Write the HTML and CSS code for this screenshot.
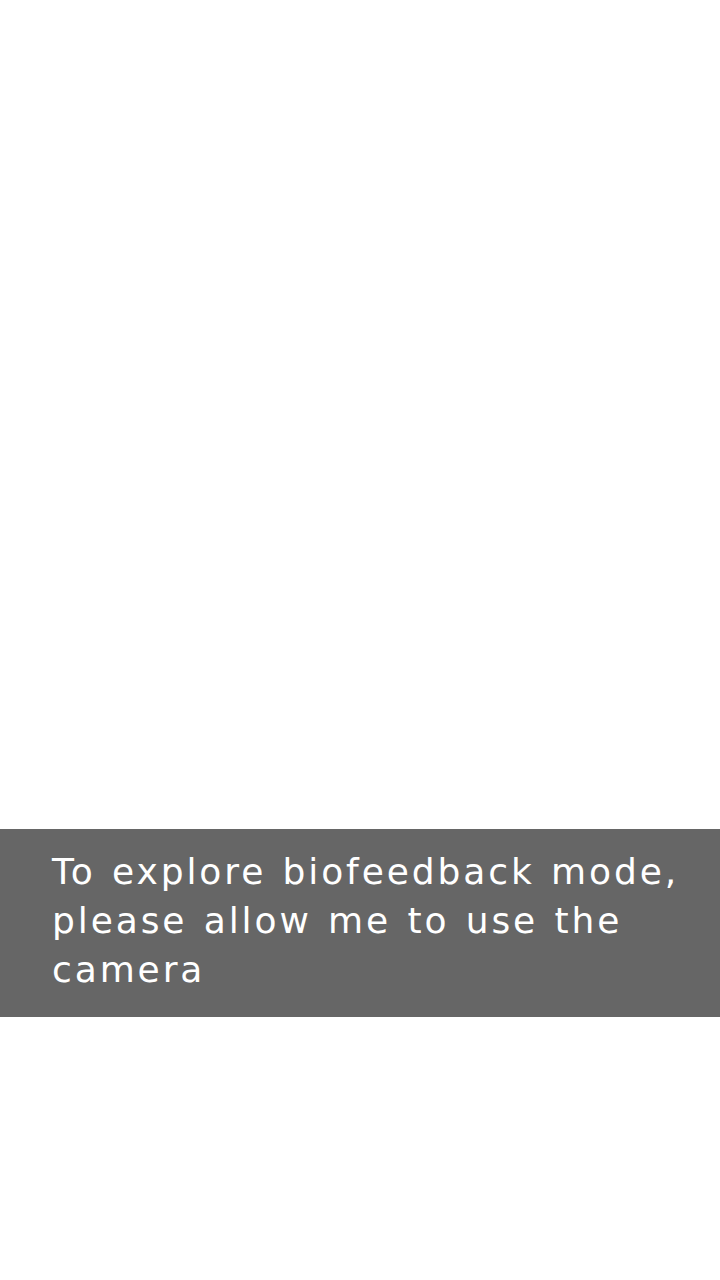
FILE: index.html
```html
<!DOCTYPE html>
<html lang="en">
<head>
<meta charset="utf-8">
<title>Biofeedback</title>
<link rel="stylesheet" href="styles.css">
</head>
<body>
<main class="screen">
  <div class="camera-view"></div>
  <section class="notice">
    <p class="notice-text">To explore biofeedback mode, please allow me to use the camera</p>
  </section>
</main>
</body>
</html>
```
FILE: styles.css
```css
html, body {
  margin: 0;
  padding: 0;
  background: #ffffff;
}
.screen {
  width: 720px;
  height: 1280px;
  display: flex;
  flex-direction: column;
}
.camera-view {
  height: 829px;
  flex: none;
}
.notice {
  background: #666666;
  height: 188px;
  box-sizing: border-box;
  padding: 18px 24px 0 52px;
}
.notice-text {
  margin: 0;
  color: #ffffff;
  font-family: "DejaVu Sans", sans-serif;
  font-size: 36px;
  line-height: 49px;
  letter-spacing: 2.9px;
  word-spacing: 2px;
}
```
